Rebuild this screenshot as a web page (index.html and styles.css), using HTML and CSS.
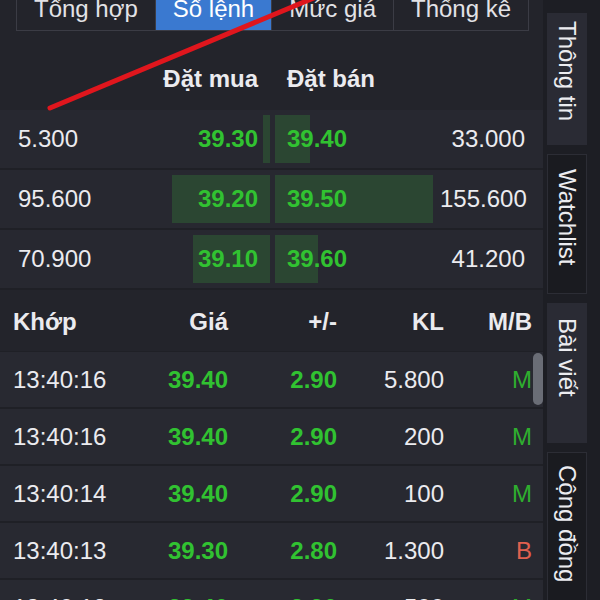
FILE: index.html
```html
<!DOCTYPE html>
<html lang="vi">
<head>
    <meta charset="UTF-8">
    <meta name="viewport" content="width=device-width, initial-scale=1.0">
    <title>Sổ lệnh</title>
    <link rel="stylesheet" href="styles.css">
</head>
<body>
    <div class="app">
        <div class="main">
            <div class="tabs">
                <div class="tab">Tổng hợp</div>
                <div class="tab active">Sổ lệnh</div>
                <div class="tab">Mức giá</div>
                <div class="tab">Thống kê</div>
            </div>

            <div class="book-head">
                <div></div>
                <div class="bid-h">Đặt mua</div>
                <div class="ask-h">Đặt bán</div>
                <div></div>
            </div>
            <div class="book">
                <div class="book-row">
                    <div class="vol">5.300</div>
                    <div class="bid" style="--w: 7px">39.30</div>
                    <div class="ask" style="--w: 35px">39.40</div>
                    <div class="vol r">33.000</div>
                </div>
                <div class="book-row">
                    <div class="vol">95.600</div>
                    <div class="bid" style="--w: 98px">39.20</div>
                    <div class="ask" style="--w: 158px">39.50</div>
                    <div class="vol r">155.600</div>
                </div>
                <div class="book-row">
                    <div class="vol">70.900</div>
                    <div class="bid" style="--w: 77px">39.10</div>
                    <div class="ask" style="--w: 43px">39.60</div>
                    <div class="vol r">41.200</div>
                </div>
            </div>

            <div class="trade-head">
                <div>Khớp</div>
                <div>Giá</div>
                <div>+/-</div>
                <div>KL</div>
                <div>M/B</div>
            </div>
            <div class="trades">
                <div class="trade-row">
                    <div>13:40:16</div>
                    <div class="up">39.40</div>
                    <div class="up">2.90</div>
                    <div>5.800</div>
                    <div class="buy">M</div>
                </div>
                <div class="trade-row">
                    <div>13:40:16</div>
                    <div class="up">39.40</div>
                    <div class="up">2.90</div>
                    <div>200</div>
                    <div class="buy">M</div>
                </div>
                <div class="trade-row">
                    <div>13:40:14</div>
                    <div class="up">39.40</div>
                    <div class="up">2.90</div>
                    <div>100</div>
                    <div class="buy">M</div>
                </div>
                <div class="trade-row">
                    <div>13:40:13</div>
                    <div class="up">39.30</div>
                    <div class="up">2.80</div>
                    <div>1.300</div>
                    <div class="sell">B</div>
                </div>
                <div class="trade-row">
                    <div>13:40:12</div>
                    <div class="up">39.40</div>
                    <div class="up">2.90</div>
                    <div>500</div>
                    <div class="buy">M</div>
                </div>
                <div class="scrollbar"></div>
            </div>
        </div>

        <div class="side">
            <div class="side-tab light first"><span>Thông tin</span></div>
            <div class="side-tab"><span>Watchlist</span></div>
            <div class="side-tab light"><span>Bài viết</span></div>
            <div class="side-tab last"><span>Cộng đồng</span></div>
        </div>

        <svg class="mark" width="600" height="600" viewBox="0 0 600 600">
            <line x1="50" y1="108" x2="316" y2="-3" stroke="#e0161d" stroke-width="5" stroke-linecap="round"/>
        </svg>
    </div>
</body>
</html>
```

FILE: styles.css
```css
body {
    margin: 0;
    background-color: #1d1e24;
    font-family: "Liberation Sans", Arial, sans-serif;
    font-size: 24px;
    color: #ebebef;
}
.app {
    display: flex;
    width: 600px;
    height: 600px;
    overflow: hidden;
    position: relative;
}
.main {
    width: 543px;
    flex: none;
    background-color: #23242b;
}

/* top tabs */
.tabs {
    display: flex;
    margin: -3px 0 0 16px;
}
.tab {
    padding: 0 17px 9px;
    line-height: 24px;
    border-right: 1px solid #3b3c45;
    border-bottom: 1px solid #3b3c45;
    color: #e2e2e6;
}
.tab:first-child {
    border-left: 1px solid #3b3c45;
}
.tab.active {
    background-color: #3a79d0;
    color: #fff;
}

/* order book */
.book-head,
.book-row {
    display: grid;
    grid-template-columns: 132px 120px 170px 85px;
    padding: 0 18px;
}
.book-head {
    height: 63px;
    padding-top: 16px;
    align-items: center;
    font-weight: bold;
}
.bid-h {
    text-align: right;
    padding-right: 12px;
}
.ask-h {
    padding-left: 17px;
}
.book {
    display: flex;
    flex-direction: column;
    gap: 2px;
    padding-bottom: 2px;
    background-color: #1f2026;
}
.book-row {
    height: 58px;
    background-color: #272830;
}
.vol {
    align-self: center;
}
.vol.r {
    text-align: right;
}
.bid, .ask {
    margin: 5px 0;
    line-height: 48px;
    color: #31c231;
    font-weight: bold;
}
.bid {
    text-align: right;
    padding-right: 12px;
    background: linear-gradient(#2b4632, #2b4632) right / var(--w) 100% no-repeat;
}
.ask {
    margin-left: 5px;
    padding-left: 12px;
    background: linear-gradient(#2b4632, #2b4632) left / var(--w) 100% no-repeat;
}

/* matched trades */
.trade-head,
.trade-row {
    display: grid;
    grid-template-columns: 110px 105px 109px 107px 88px;
    padding-left: 13px;
    align-items: center;
}
.trade-head > div:not(:first-child),
.trade-row > div:not(:first-child) {
    text-align: right;
}
.trade-head {
    height: 59px;
    padding-top: 2px;
    font-weight: bold;
}
.trades {
    position: relative;
    display: flex;
    flex-direction: column;
    gap: 2px;
    padding-top: 1px;
    background-color: #1f2026;
}
.trade-row {
    height: 55px;
    background-color: #282931;
}
.up {
    color: #31c231;
    font-weight: bold;
}
.buy {
    color: #2fae2f;
}
.sell {
    color: #e0604f;
}
.scrollbar {
    position: absolute;
    right: 0;
    top: 2px;
    width: 10px;
    height: 52px;
    border-radius: 5px;
    background-color: #6a6d76;
}

/* right side tabs */
.side {
    flex: 1;
    display: flex;
    flex-direction: column;
    gap: 9px;
    padding: 13px 0 0 4px;
}
.side-tab {
    width: 40px;
    height: 140px;
    flex: none;
    display: flex;
    justify-content: center;
    padding-top: 14px;
    box-sizing: border-box;
    background-color: #1a1b20;
    border: 1px solid #2c2d35;
}
.side-tab.light {
    background-color: #2a2b34;
    border-color: #2a2b34;
}
.side-tab.first {
    height: 132px;
    padding-top: 7px;
}
.side-tab.last {
    height: 160px;
    padding-top: 12px;
}
.side-tab span {
    writing-mode: vertical-rl;
    line-height: 26px;
    color: #ececf0;
}

.mark {
    position: absolute;
    left: 0;
    top: 0;
    pointer-events: none;
}
```
